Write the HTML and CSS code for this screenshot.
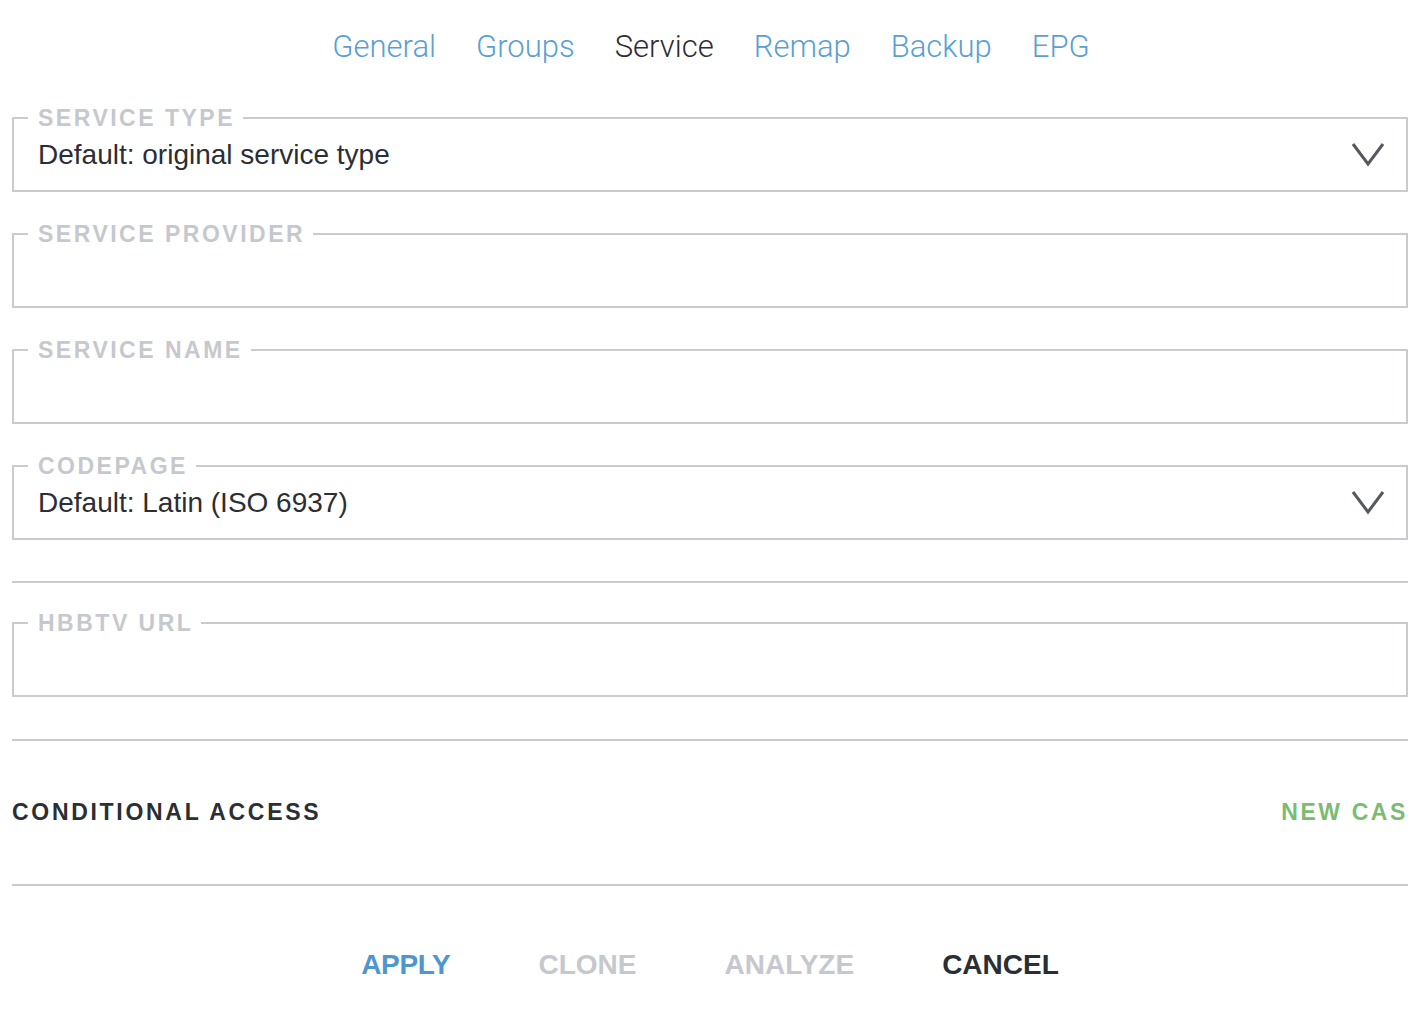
FILE: index.html
```html
<!DOCTYPE html>
<html lang="en">
<head>
<meta charset="utf-8">
<title>Service</title>
<link rel="stylesheet" href="styles.css">
</head>
<body>
<div class="page">
  <nav class="tabs">
    <a class="tab">General</a>
    <a class="tab">Groups</a>
    <a class="tab active">Service</a>
    <a class="tab">Remap</a>
    <a class="tab">Backup</a>
    <a class="tab">EPG</a>
  </nav>

  <form class="form">
    <fieldset class="field">
      <legend class="label">SERVICE TYPE</legend>
      <div class="value select">
        <span>Default: original service type</span>
        <svg class="chev" width="34" height="26" viewBox="0 0 34 26"><path d="M2 2 L17 22 L32 2" fill="none" stroke="#55585d" stroke-width="3"/></svg>
      </div>
    </fieldset>

    <fieldset class="field">
      <legend class="label">SERVICE PROVIDER</legend>
      <div class="value"></div>
    </fieldset>

    <fieldset class="field">
      <legend class="label">SERVICE NAME</legend>
      <div class="value"></div>
    </fieldset>

    <fieldset class="field">
      <legend class="label">CODEPAGE</legend>
      <div class="value select">
        <span>Default: Latin (ISO 6937)</span>
        <svg class="chev" width="34" height="26" viewBox="0 0 34 26"><path d="M2 2 L17 22 L32 2" fill="none" stroke="#55585d" stroke-width="3"/></svg>
      </div>
    </fieldset>

    <hr class="rule rule-a">

    <fieldset class="field field-after-rule">
      <legend class="label">HBBTV URL</legend>
      <div class="value"></div>
    </fieldset>

    <hr class="rule rule-b">

    <div class="ca-row">
      <span class="ca-title">CONDITIONAL ACCESS</span>
      <a class="ca-new">NEW CAS</a>
    </div>

    <hr class="rule">

    <div class="actions">
      <a class="btn btn-apply">APPLY</a>
      <a class="btn btn-disabled">CLONE</a>
      <a class="btn btn-disabled">ANALYZE</a>
      <a class="btn btn-cancel">CANCEL</a>
    </div>
  </form>
</div>
</body>
</html>
```

FILE: styles.css
```css
html, body {
  margin: 0;
  padding: 0;
  background: #ffffff;
}

body {
  font-family: "Liberation Sans", Arial, sans-serif;
  color: #2b2e33;
}

.page {
  padding: 0 8px 0 12px;
}

.tabs {
  display: flex;
  justify-content: center;
  gap: 40px;
  padding-top: 27px;
  padding-left: 2px;
  height: 40px;
  font-family: Roboto, "Liberation Sans", sans-serif;
  font-weight: 300;
  font-size: 31px;
  line-height: 40px;
}

.tab {
  color: #5a9fd1;
  cursor: pointer;
}

.tab.active {
  color: #2b2e33;
}

.form {
  margin-top: 40px;
}

.field {
  margin: 0 0 31px 0;
  padding: 0 22px 0 24px;
  border: 2px solid #c9cbd0;
  min-width: 0;
}

.field:nth-of-type(4) {
  margin-bottom: 0;
}

.label {
  margin-left: -10px;
  padding: 0 8px 0 10px;
  font-size: 23px;
  line-height: 22px;
  font-weight: bold;
  letter-spacing: 2.5px;
  color: #c6c8cd;
}

.value {
  box-sizing: border-box;
  height: 61px;
  padding-top: 10px;
  font-size: 28px;
  line-height: 32px;
  color: #2b2e33;
}

.select {
  display: flex;
  justify-content: space-between;
  align-items: flex-start;
}

.chev {
  margin-top: 3px;
  margin-right: -1px;
}

.rule {
  border: 0;
  height: 2px;
  background: #c9cbd0;
  margin: 0;
}

.rule-a {
  margin-top: 41px;
}

.field-after-rule {
  margin-top: 29px;
  margin-bottom: 0;
}

.rule-b {
  margin-top: 42px;
}

.ca-row {
  height: 143px;
  display: flex;
  justify-content: space-between;
  align-items: center;
  font-size: 23px;
  font-weight: bold;
}

.ca-title {
  letter-spacing: 2.7px;
  color: #2b2e33;
}

.ca-new {
  letter-spacing: 2.6px;
  color: #7cbb72;
  cursor: pointer;
}

.actions {
  height: 156px;
  padding-top: 2px;
  box-sizing: border-box;
  display: flex;
  justify-content: center;
  align-items: center;
  gap: 88px;
  font-size: 28px;
  font-weight: bold;
}

.btn {
  cursor: pointer;
}

.btn-apply {
  color: #4e97cc;
  letter-spacing: -0.3px;
}

.btn-disabled {
  color: #c6c8cd;
}

.btn-cancel {
  color: #2b2e33;
}
```
